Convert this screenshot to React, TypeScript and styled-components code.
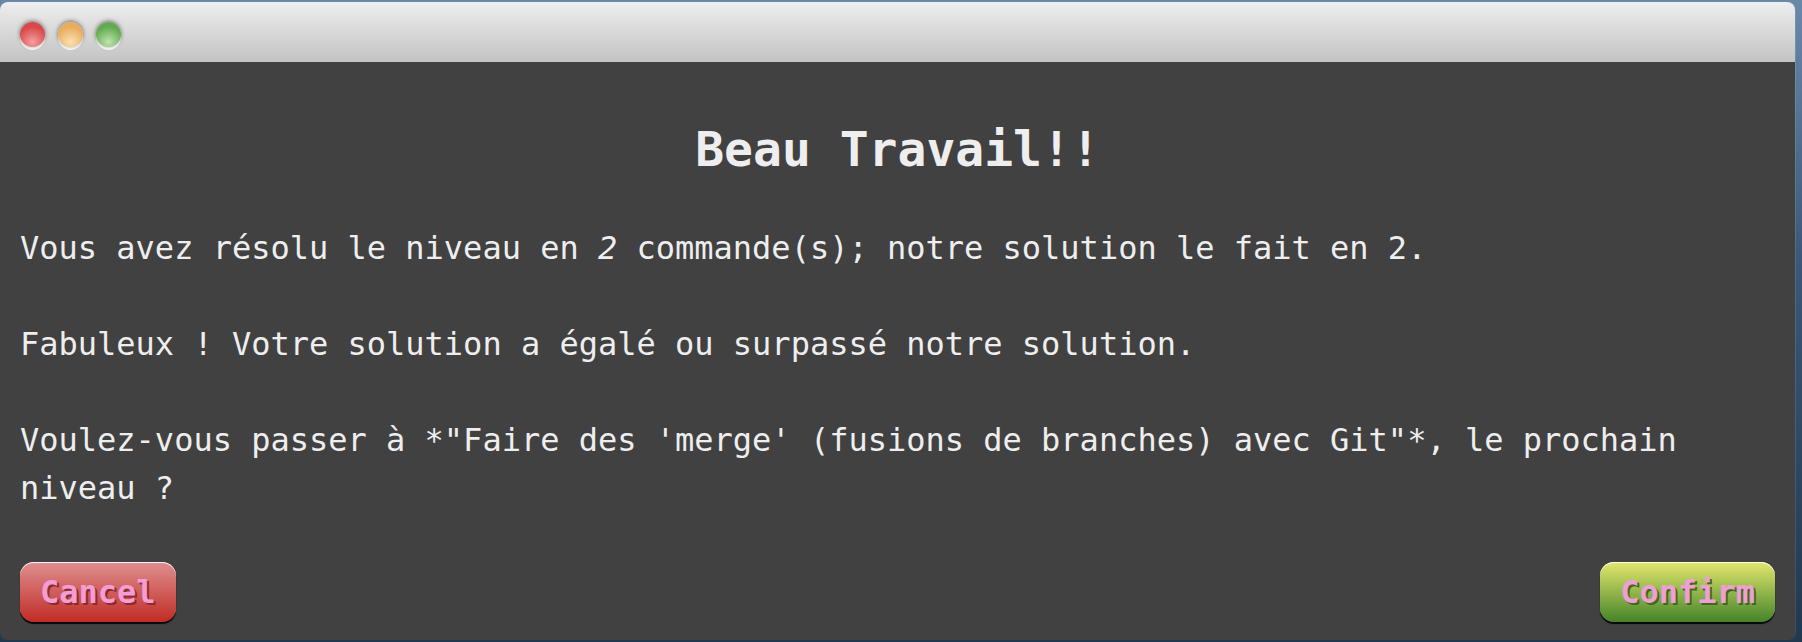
import React from 'react';
import styled, { createGlobalStyle } from 'styled-components';

const GlobalStyle = createGlobalStyle`
  html, body {
    margin: 0;
    padding: 0;
  }
  body {
    background: linear-gradient(to bottom, #6a88a8 0%, #3c5876 40%, #22384e 100%);
    font-family: 'DejaVu Sans Mono', 'Liberation Mono', monospace;
  }
`;

const Desktop = styled.div`
  width: 1802px;
  height: 642px;
  box-sizing: border-box;
  padding: 2px 7px 2px 0;
  display: flex;
`;

const Window = styled.div`
  flex: 1;
  display: flex;
  flex-direction: column;
  border-radius: 8px;
  overflow: hidden;
  box-shadow: 1px 0 0 rgba(255, 255, 255, 0.12);
`;

const TitleBar = styled.div`
  height: 60px;
  flex: none;
  display: flex;
  align-items: center;
  gap: 13px;
  padding: 0 0 0 20px;
  background: linear-gradient(to bottom, #eeeeee, #c3c3c3);
`;

const Light = styled.span<{ $color: string; $light: string }>`
  width: 25px;
  height: 25px;
  border-radius: 50%;
  margin-top: 4px;
  background: radial-gradient(circle at 50% 80%, ${(p) => p.$light} 0%, ${(p) => p.$color} 65%);
  box-shadow:
    0 -1px 4px rgba(0, 0, 0, 0.5),
    0 3px 0 #fafafa;
`;

const Content = styled.div`
  flex: 1;
  background: #414141;
  padding: 0 20px;
  display: flex;
  flex-direction: column;
  color: #eeeeee;
`;

const Heading = styled.h2`
  margin: 51px 0 39px;
  font-size: 48px;
  line-height: 72px;
  font-weight: bold;
  text-align: center;
`;

const Paragraph = styled.p`
  margin: 0 0 48px;
  font-size: 32px;
  line-height: 48px;

  &:last-of-type {
    margin-bottom: 50px;
  }
`;

const Actions = styled.div`
  display: flex;
  justify-content: space-between;
`;

const Button = styled.button<{ $top: string; $bottom: string; $shade: string }>`
  height: 60px;
  padding: 0 20px;
  border: none;
  border-radius: 14px;
  font-family: 'DejaVu Sans Mono', monospace;
  font-size: 32px;
  font-weight: bold;
  color: #f19ed6;
  text-shadow: 2px 2px 0 ${(p) => p.$shade};
  background: linear-gradient(to bottom, ${(p) => p.$top}, ${(p) => p.$bottom});
  box-shadow:
    inset 0 1px 0 rgba(255, 255, 255, 0.9),
    0 2px 1px rgba(0, 0, 0, 0.9);
  cursor: pointer;
`;

export default function App() {
  return (
    <>
      <GlobalStyle />
      <Desktop>
        <Window>
          <TitleBar>
            <Light $color="#d94848" $light="#f5a0a0" />
            <Light $color="#e8ad5c" $light="#fbe0b0" />
            <Light $color="#62aa50" $light="#c0e4b0" />
          </TitleBar>
          <Content>
            <Heading>Beau Travail!!</Heading>
            <Paragraph>
              Vous avez résolu le niveau en <em>2</em> commande(s); notre solution le fait en 2.
            </Paragraph>
            <Paragraph>Fabuleux ! Votre solution a égalé ou surpassé notre solution.</Paragraph>
            <Paragraph>
              Voulez-vous passer à *"Faire des 'merge' (fusions de branches) avec Git"*, le prochain niveau ?
            </Paragraph>
            <Actions>
              <Button $top="#df8f90" $bottom="#c12c24" $shade="#8e2a2a">
                Cancel
              </Button>
              <Button $top="#e3e76c" $bottom="#44842a" $shade="#3d6a22">
                Confirm
              </Button>
            </Actions>
          </Content>
        </Window>
      </Desktop>
    </>
  );
}
